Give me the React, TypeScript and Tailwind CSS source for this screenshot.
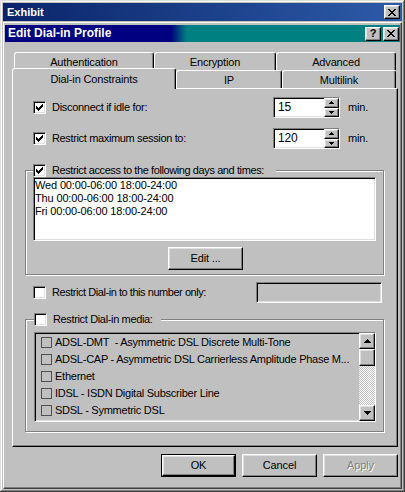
import React from "react";

const raised =
  "border border-t-white border-l-white border-b-black border-r-black shadow-[inset_-1px_-1px_#808080,inset_1px_1px_#dfdfdf]";
const sunken =
  "border border-t-[#808080] border-l-[#808080] border-b-white border-r-white shadow-[inset_1px_1px_#000,inset_-1px_-1px_#dfdfdf]";

const Pixels = ({ w, h, d, fill = "#000" }: { w: number; h: number; d: string; fill?: string }) => (
  <svg width={w} height={h} viewBox={`0 0 ${w} ${h}`} shapeRendering="crispEdges">
    <path d={d} fill={fill} />
  </svg>
);

const CloseGlyph = () => (
  <Pixels
    w={8}
    h={7}
    d="M0 0h2v1H0zM6 0h2v1H6zM1 1h2v1H1zM5 1h2v1H5zM2 2h4v1H2zM3 3h2v1H3zM2 4h4v1H2zM1 5h2v1H1zM5 5h2v1H5zM0 6h2v1H0zM6 6h2v1H6z"
  />
);

const CheckGlyph = () => (
  <Pixels
    w={7}
    h={7}
    d="M6 0h1v1H6zM5 1h2v1H5zM0 2h1v1H0zM4 2h3v1H4zM0 3h2v1H0zM3 3h3v1H3zM0 4h5v1H0zM1 5h3v1H1zM2 6h1v1H2z"
  />
);

const ArrowUp = ({ small }: { small?: boolean }) =>
  small ? (
    <Pixels w={5} h={3} d="M2 0h1v1H2zM1 1h3v1H1zM0 2h5v1H0z" />
  ) : (
    <Pixels w={7} h={4} d="M3 0h1v1H3zM2 1h3v1H2zM1 2h5v1H1zM0 3h7v1H0z" />
  );

const ArrowDown = ({ small }: { small?: boolean }) =>
  small ? (
    <Pixels w={5} h={3} d="M0 0h5v1H0zM1 1h3v1H1zM2 2h1v1H2z" />
  ) : (
    <Pixels w={7} h={4} d="M0 0h7v1H0zM1 1h5v1H1zM2 2h3v1H2zM3 3h1v1H3z" />
  );

const CaptionButton = ({ children }: { children: React.ReactNode }) => (
  <div className={`flex h-[14px] w-[16px] items-center justify-center bg-[#c0c0c0] ${raised}`}>
    {children}
  </div>
);

const Checkbox = ({ checked }: { checked?: boolean }) => (
  <span className={`flex h-[13px] w-[13px] shrink-0 items-center justify-center bg-white ${sunken}`}>
    {checked && <CheckGlyph />}
  </span>
);

const Spinner = ({ value }: { value: string }) => (
  <div className={`flex h-[21px] w-[67px] items-stretch bg-white ${sunken}`}>
    <div className="flex flex-1 items-center pl-[4px] text-[12px]">{value}</div>
    <div className="flex w-[15px] flex-col">
      <div className={`flex flex-1 items-center justify-center bg-[#c0c0c0] ${raised}`}>
        <ArrowUp small />
      </div>
      <div className={`flex flex-1 items-center justify-center bg-[#c0c0c0] ${raised}`}>
        <ArrowDown small />
      </div>
    </div>
  </div>
);

const Button = ({
  label,
  isDefault,
  disabled,
  className = "",
}: {
  label: string;
  isDefault?: boolean;
  disabled?: boolean;
  className?: string;
}) => (
  <div
    className={`h-[23px] w-[75px] ${isDefault ? "border border-black" : ""} ${className}`}
  >
    <div
      className={`flex h-full w-full items-center justify-center bg-[#c0c0c0] ${raised} ${
        disabled ? "text-[#808080] [text-shadow:1px_1px_#fff]" : ""
      }`}
    >
      {label}
    </div>
  </div>
);

const tabBase =
  "flex justify-center border-l border-t border-r border-white border-r-black rounded-t-[3px] bg-[#c0c0c0] shadow-[inset_-1px_0_#808080]";

const mediaItems = [
  "ADSL-DMT  - Asymmetric DSL Discrete Multi-Tone",
  "ADSL-CAP - Asymmetric DSL Carrierless Amplitude Phase M...",
  "Ethernet",
  "IDSL - ISDN Digital Subscriber Line",
  "SDSL - Symmetric DSL",
];

const schedule = [
  "Wed 00:00-06:00 18:00-24:00",
  "Thu 00:00-06:00 18:00-24:00",
  "Fri 00:00-06:00 18:00-24:00",
];

export default function App() {
  return (
    <div className="h-[492px] w-[405px] bg-[#c0c0c0] p-[3px] font-['Liberation_Sans',Arial,sans-serif] text-[11px] leading-[13px] tracking-[-0.15px] text-black shadow-[inset_-1px_-1px_#404040,inset_1px_1px_#dfdfdf,inset_-2px_-2px_#808080,inset_2px_2px_#fff]">
      {/* outer window title */}
      <div className="flex h-[18px] items-center justify-between bg-[linear-gradient(to_right,#0a246a,#2d5ba8)] pl-[4px] pr-[2px]">
        <span className="text-[11px] font-bold tracking-normal text-white">Exhibit</span>
        <CaptionButton>
          <CloseGlyph />
        </CaptionButton>
      </div>

      {/* inner dialog */}
      <div className="mt-[1px] flex h-[467px] flex-col border border-t-white border-l-white border-b-[#404040] border-r-[#404040] px-[1px] pt-[2px] shadow-[inset_-1px_-1px_#808080]">
        <div className="flex h-[17px] shrink-0 items-center justify-between bg-[linear-gradient(to_right,#000080_42%,#008080_46%)] pl-[3px] pr-[1px]">
          <span className="text-[12px] font-bold tracking-normal text-white">Edit Dial-in Profile</span>
          <div className="flex gap-[2px]">
            <CaptionButton>
              <span className="text-[11px] font-bold leading-none">?</span>
            </CaptionButton>
            <CaptionButton>
              <CloseGlyph />
            </CaptionButton>
          </div>
        </div>

        <div className="pl-[7px] pr-[2px]">
          {/* tabs */}
          <div className="mt-[10px] flex h-[18px] pl-[2px]">
            <div className={`${tabBase} w-[140px] pt-[3px]`}>Authentication</div>
            <div className={`${tabBase} w-[122px] pt-[3px]`}>Encryption</div>
            <div className={`${tabBase} w-[120px] pt-[3px]`}>Advanced</div>
          </div>
          <div className="-mt-[2px] flex h-[20px] items-end">
            <div className={`${tabBase} relative z-10 -mb-[1px] h-[21px] w-[164px] pt-[4px]`}>
              Dial-in Constraints
            </div>
            <div className={`${tabBase} h-[18px] w-[106px] pt-[3px]`}>IP</div>
            <div className={`${tabBase} h-[18px] w-[114px] pt-[3px]`}>Multilink</div>
          </div>

          {/* tab panel */}
          <div className="h-[359px] border border-t-white border-l-white border-b-black border-r-black shadow-[inset_-1px_-1px_#808080]">
            <div className="mt-[8px] flex items-center pl-[20px]">
              <Checkbox checked />
              <span className="ml-[6px] w-[221px] tracking-[-0.3px]">Disconnect if idle for:</span>
              <Spinner value="15" />
              <span className="ml-[8px]">min.</span>
            </div>
            <div className="mt-[10px] flex items-center pl-[20px]">
              <Checkbox checked />
              <span className="ml-[6px] w-[221px] tracking-[-0.35px]">Restrict maximum session to:</span>
              <Spinner value="120" />
              <span className="ml-[8px]">min.</span>
            </div>

            {/* days and times group */}
            <div className="ml-[12px] mt-[21px] w-[359px] border border-[#808080] px-[7px] pb-[4px] shadow-[inset_1px_1px_#fff,1px_1px_#fff]">
              <div className="-mt-[7px] flex">
                <div className="flex items-center gap-[6px] bg-[#c0c0c0] pr-[12px]">
                  <Checkbox checked />
                  <span className="tracking-[-0.4px]">Restrict access to the following days and times:</span>
                </div>
              </div>
              <div className={`h-[64px] bg-white pl-[1px] pt-[1px] ${sunken}`}>
                {schedule.map((line) => (
                  <div key={line} className="h-[13px]">
                    {line}
                  </div>
                ))}
              </div>
              <div className="mt-[6px] flex justify-center">
                <Button label="Edit ..." className="ml-[2px]" />
              </div>
            </div>

            {/* number row */}
            <div className="mt-[7px] flex items-center pl-[20px]">
              <Checkbox />
              <span className="ml-[6px] w-[204px] tracking-[-0.45px]">Restrict Dial-in to this number only:</span>
              <div className={`h-[21px] w-[126px] bg-[#c0c0c0] ${sunken}`} />
            </div>

            {/* media group */}
            <div className="ml-[12px] mt-[16px] w-[359px] border border-[#808080] pb-[9px] pl-[8px] pr-[7px] shadow-[inset_1px_1px_#fff,1px_1px_#fff]">
              <div className="-mt-[7px] flex">
                <div className="flex items-center gap-[6px] bg-[#c0c0c0] pr-[8px]">
                  <Checkbox />
                  <span className="tracking-[-0.35px]">Restrict Dial-in media:</span>
                </div>
              </div>
              <div className={`mt-[6px] flex h-[90px] bg-[#c0c0c0] ${sunken}`}>
                <div className="min-w-0 flex-1 overflow-hidden pl-[6px] pt-[1px]">
                  {mediaItems.map((item) => (
                    <div key={item} className="flex h-[17px] items-center gap-[3px] whitespace-pre">
                      <span className="h-[11px] w-[11px] shrink-0 border border-[#505050]" />
                      <span className="text-[11px] tracking-[-0.25px]">{item}</span>
                    </div>
                  ))}
                </div>
                <div className="flex w-[16px] shrink-0 flex-col">
                  <div className={`flex h-[16px] shrink-0 items-center justify-center bg-[#c0c0c0] ${raised}`}>
                    <ArrowUp />
                  </div>
                  <div className="flex flex-1 flex-col bg-[repeating-conic-gradient(#fff_0%_25%,#c0c0c0_0%_50%)] bg-[length:2px_2px]">
                    <div className={`h-[17px] bg-[#c0c0c0] ${raised}`} />
                  </div>
                  <div className={`flex h-[16px] shrink-0 items-center justify-center bg-[#c0c0c0] ${raised}`}>
                    <ArrowDown />
                  </div>
                </div>
              </div>
            </div>
          </div>

          {/* dialog buttons */}
          <div className="mt-[7px] flex justify-end gap-[6px]">
            <Button label="OK" isDefault />
            <Button label="Cancel" />
            <Button label="Apply" disabled />
          </div>
        </div>
      </div>
    </div>
  );
}
